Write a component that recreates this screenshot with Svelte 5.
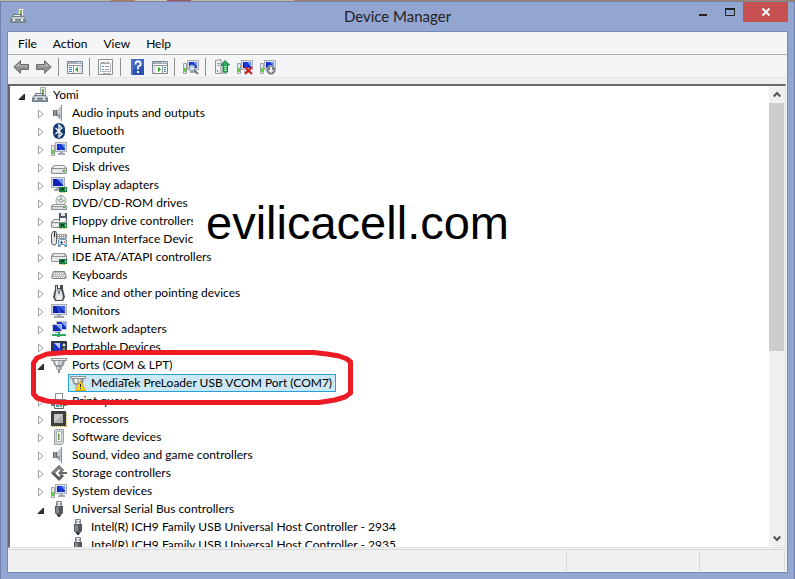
<script lang="ts">
  type Device = {
    name: string
    icon: string
    level: number
    open?: boolean
  }

  const menus = ['File', 'Action', 'View', 'Help']

  // each inner list is one group between separators
  const tools = [
    [['back', 'Back'], ['forward', 'Forward']],
    [['tree', 'Show/Hide Console Tree']],
    [['properties', 'Properties']],
    [['help', 'Help'], ['action', 'Show/Hide Action Pane']],
    [['scan', 'Scan for hardware changes']],
    [['update', 'Update Driver'], ['uninstall', 'Uninstall'], ['disable', 'Disable']]
  ]

  let devices = $state<Device[]>([
    { name: 'Yomi', icon: 'manager', level: 0, open: true },
    { name: 'Audio inputs and outputs', icon: 'speaker', level: 1, open: false },
    { name: 'Bluetooth', icon: 'bluetooth', level: 1, open: false },
    { name: 'Computer', icon: 'computer', level: 1, open: false },
    { name: 'Disk drives', icon: 'disk', level: 1, open: false },
    { name: 'Display adapters', icon: 'display', level: 1, open: false },
    { name: 'DVD/CD-ROM drives', icon: 'dvd', level: 1, open: false },
    { name: 'Floppy drive controllers', icon: 'floppy', level: 1, open: false },
    { name: 'Human Interface Devices', icon: 'hid', level: 1, open: false },
    { name: 'IDE ATA/ATAPI controllers', icon: 'ide', level: 1, open: false },
    { name: 'Keyboards', icon: 'keyboard', level: 1, open: false },
    { name: 'Mice and other pointing devices', icon: 'mouse', level: 1, open: false },
    { name: 'Monitors', icon: 'monitor', level: 1, open: false },
    { name: 'Network adapters', icon: 'network', level: 1, open: false },
    { name: 'Portable Devices', icon: 'portable', level: 1, open: false },
    { name: 'Ports (COM & LPT)', icon: 'port', level: 1, open: true },
    { name: 'MediaTek PreLoader USB VCOM Port (COM7)', icon: 'portwarn', level: 2 },
    { name: 'Print queues', icon: 'printer', level: 1, open: false },
    { name: 'Processors', icon: 'cpu', level: 1, open: false },
    { name: 'Software devices', icon: 'software', level: 1, open: false },
    { name: 'Sound, video and game controllers', icon: 'speaker', level: 1, open: false },
    { name: 'Storage controllers', icon: 'storage', level: 1, open: false },
    { name: 'System devices', icon: 'computer', level: 1, open: false },
    { name: 'Universal Serial Bus controllers', icon: 'usb', level: 1, open: true },
    { name: 'Intel(R) ICH9 Family USB Universal Host Controller - 2934', icon: 'usb', level: 2 },
    { name: 'Intel(R) ICH9 Family USB Universal Host Controller - 2935', icon: 'usb', level: 2 }
  ])

  let selected = $state('MediaTek PreLoader USB VCOM Port (COM7)')

  // rows under a closed parent are left out
  const rows = $derived.by(() => {
    const out: Device[] = []
    let hiddenBelow = Infinity
    for (const d of devices) {
      if (d.level > hiddenBelow) continue
      hiddenBelow = d.open === false ? d.level : Infinity
      out.push(d)
    }
    return out
  })
</script>

{#snippet screen()}
  <path d="M4 1h12v10H4z" fill="#a9adb8" />
  <path d="M5 2h10v8H5z" fill="#dde0ea" />
  <path d="M6 3h8v6H6z" fill="#0c1fb0" />
  <path d="M10 3h4v5z" fill="#6f93ff" />
  <path d="M6 3h4l3 6H9z" fill="#1a3bdc" />
  <path d="M9 11h3v1h2v2H7v-2h2z" fill="#a3a7ae" />
{/snippet}

{#snippet tower()}
  <path d="M.5 4.500h3v10h-3z" fill="#e8ebed" stroke="#9a9fa4" />
  <path d="M1 9h2v4H1z" fill="#5fd13c" />
{/snippet}

{#snippet drive()}
  <path d="M3 6h10l3 3v5l-1 1H1l-1-1V9z" fill="#8f9396" />
  <path d="M3.500 7h9l2 2h-13z" fill="#f3f4f5" />
  <path d="M1 10h14v4H1z" fill="#d8dadc" />
  <path d="M2 11h8v2H2z" fill="#eff0f1" />
  <path d="M12 11h2v2h-2z" fill="#3fa832" />
{/snippet}

{#snippet card()}
  <path d="M8 10h8v5H8z" fill="#1c7d43" />
  <path d="M10 11h3v2h-3z" fill="#083f22" />
  <path d="M14 11h1v3h-1z" fill="#8fd0a5" />
  <path d="M9 15h2v1H9zM12 15h2v1h-2z" fill="#d9bd55" />
{/snippet}

{#snippet plug()}
  <path d="M0 1h16v3h-2l-1 4-2 2H5L3 8 2 4H0z" fill="#8f9396" />
  <path d="M1 2h14v1H1z" fill="#eceeef" />
  <path d="M4 4h8l-1 4H5z" fill="#b9bdc0" />
  <path d="M4 4h3v4H5z" fill="#f1f2f3" />
  <path d="M9 4h1v4H9z" fill="#dcdfe0" />
  <path d="M5 10h6v2l-1 1H6l-1-1z" fill="#a7abae" />
  <path d="M6 10h2v2H6z" fill="#e2e4e5" />
  <path d="M7 13h2v3H7z" fill="#8a8e91" />
{/snippet}

{#snippet pane()}
  <path d="M.5 2.500h15v12H.5z" fill="#fff" stroke="#7d8793" />
  <path d="M1 3h14v2H1z" fill="#a6b0bd" />
  <path d="M10 3h1v1h-1zM12 3h1v1h-1zM14 3h1v1h-1z" fill="#fff" />
  <path d="M1 6h14v1H1z" fill="#8c96a3" />
{/snippet}

{#snippet icon(name: string)}
  <svg class="icon" viewBox="0 0 16 16" width="16" height="16" aria-hidden="true">
    {#if name === 'back' || name === 'forward'}
      <path
        d={name === 'back' ? 'M.7 8 7.500 1.700V5.500h8v5h-8v3.800z' : 'M15.300 8 8.500 1.700V5.500h-8v5h8v3.800z'}
        fill="#8f8f8f"
        stroke="#6c6c6c"
      />
      <path d={name === 'back' ? 'M3 7.500 6.500 4v2.500H14v1z' : 'M13 7.500 9.500 4v2.500H2v1z'} fill="#bcbcbc" />
    {:else if name === 'tree'}
      {@render pane()}
      <path d="M2 8h3v1H2zM2 10h3v1H2zM2 12h3v1H2z" fill="#2d83c6" />
      <path d="M6 7h1v7H6z" fill="#8c96a3" />
      <path d="M12 7h3v7h-3z" fill="#e1e5ea" />
      <path d="m8 10.500 3-3v6z" fill="#38a52e" />
    {:else if name === 'action'}
      {@render pane()}
      <path d="M12 8h2v1h-2zM12 10h2v1h-2zM12 12h2v1h-2z" fill="#2d83c6" />
      <path d="M10 7h1v7h-1z" fill="#8c96a3" />
      <path d="M1 7h3v7H1z" fill="#e1e5ea" />
      <path d="m9 10.500-3-3v6z" fill="#38a52e" />
    {:else if name === 'properties'}
      <path d="M.5.500h14v15H.5z" fill="#fbfbfb" stroke="#8c8f93" />
      <path d="M2.500 4.500h10v8h-10z" fill="#fff" stroke="#b0b4b8" />
      <path d="M3 3h4v2H3zM8 3h3v1H8z" fill="#a0a5ab" />
      <path d="M4 7h2v1H4zM4 10h2v1H4z" fill="#3c9bd0" />
      <path d="M7 7h4v1H7zM7 10h4v1H7zM5 14h3v1H5zM9 14h3v1H9z" fill="#989da2" />
    {:else if name === 'help'}
      <path d="M2 0h13v16H2z" fill="#2b51b5" />
      <path d="M2 0h2v16H2z" fill="#5373c9" />
      <path d="M4 0h11v7L4 10z" fill="#4067c6" />
      <path d="M6.500 5.500V4l1-1.500h3l1 1.500v2L9 8v2.500" fill="none" stroke="#fff" stroke-width="1.800" />
      <path d="M8 12h2v2H8z" fill="#fff" />
    {:else if name === 'scan'}
      {@render tower()}
      {@render screen()}
      <path d="m11 11 4 4" stroke="#6b7b88" stroke-width="2" />
      <circle cx="9" cy="9" r="3" fill="#dcebf5" fill-opacity=".85" stroke="#8c979f" />
    {:else if name === 'update'}
      <path d="M1.500 1.500 7 .500v14H1.500z" fill="#f1f3f4" stroke="#8c9296" />
      <path d="M3 4h3v1H3zM3 6h3v1H3z" fill="#9aa1a6" />
      <path d="M3 11h1v2H3z" fill="#3fb02f" />
      <path d="M7 13h6v2H7z" fill="#b5babe" />
      <path d="m11 1.500 4.500 4.500h-2v7h-4.500V6h-2z" fill="#2daa5d" stroke="#147540" />
      <path d="M10 7h3v1h-3zM10 9h3v1h-3zM10 11h3v1h-3z" fill="#a9e8b8" />
    {:else if name === 'uninstall'}
      {@render tower()}
      {@render screen()}
      <path d="m8 8 7 7m0-7-7 7" stroke="#d9201b" stroke-width="2" />
    {:else if name === 'disable'}
      {@render tower()}
      {@render screen()}
      <circle cx="11" cy="11" r="4.500" fill="#777b80" stroke="#b5b8bb" />
      <path d="M10 8h2v3h2l-3 3-3-3h2z" fill="#fff" />
    {:else if name === 'manager'}
      <path d="M8.500.500h5v8h-5z" fill="#eceeee" stroke="#a6abad" />
      <path d="M10 2h2v4h-2z" fill="#70b64f" />
      <path d="M3 6h9v2h2l2 3v4H0v-4l2-3h1z" fill="#727e85" />
      <path d="M4 7h6v1H4z" fill="#eef1f2" />
      <path d="M2 9h12l1 2H1z" fill="#c3cbd0" />
      <path d="M1 12h14v2H1z" fill="#8a979e" />
      <path d="M3 11h2v2H3zM11 11h2v2h-2z" fill="#e8ecee" />
    {:else if name === 'speaker'}
      <path d="M2 5h4v6H2z" fill="#5f666b" />
      <path d="M3 5h2v6H3z" fill="#8f969b" />
      <path d="M6 5 10 1v14l-4-4z" fill="#c3c9cd" />
      <path d="M6 9h3v5l-3-3z" fill="#98a1a7" />
      <path d="M10 0h1v16h-1z" fill="#8a9196" />
    {:else if name === 'bluetooth'}
      <rect x="2" width="12" height="16" rx="6" fill="#123c73" />
      <path d="m4.500 5 6.500 6-3 3V2l3 3-6.500 6" fill="none" stroke="#fff" stroke-width="1.300" />
    {:else if name === 'computer'}
      {@render tower()}
      {@render screen()}
    {:else if name === 'disk'}
      {@render drive()}
    {:else if name === 'display'}
      <path d="M0 0h14v11H0z" fill="#a9adb8" />
      <path d="M1 1h12v9H1z" fill="#d8dce8" />
      <path d="M2 2h10v7H2z" fill="#0e22b5" />
      <path d="M6 2h6v6z" fill="#6f94fb" />
      <path d="M5 11h3v1H5zM3 12h5v2H3z" fill="#a3a7ae" />
      {@render card()}
    {:else if name === 'dvd'}
      <circle cx="10" cy="5.500" r="5" fill="#e9ecec" stroke="#9ba0a0" />
      <path d="M10 1v3M6 5h2M12 6h2" stroke="#75ad76" />
      <circle cx="10" cy="5.500" r="1.500" fill="#fff" stroke="#888" />
      <path d="M2 9h12l2 2v4H0v-4z" fill="#8f9396" />
      <path d="M2 10h12v1H2z" fill="#f3f4f5" />
      <path d="M1 12h14v2H1z" fill="#d8dadc" />
      <path d="M12 12h2v1h-2z" fill="#3fa832" />
    {:else if name === 'floppy'}
      {@render drive()}
      <path d="M8 0h8v8H8z" fill="#515a60" />
      <path d="M10 0h4v3h-4z" fill="#dfe6ea" />
      <path d="M9 5h6v3H9z" fill="#f4f5f6" />
      {@render card()}
    {:else if name === 'hid'}
      <path d="M.5 3 2 .500h3L5.500 3v9l-1.500 2H2L.5 12z" fill="#dfe1e3" stroke="#5c6266" />
      <path d="M3 1h1v5H3z" fill="#272d31" />
      <path d="M6 3h10v5H6z" fill="#9aa0a4" />
      <path d="M7 4.500h8M7 6.500h8" stroke="#f2f4f5" stroke-dasharray="1" />
      <path d="m7 9 2-1h5l2 1v7h-2l-1.500-2h-2L9 16H7z" fill="#6f95bd" />
      <path d="m8 10 1-1h5l1 1v4l-2-1h-3l-2 1z" fill="#e9f1f8" />
      <path d="M10 10h1v3h-1zM9 11h3v1H9z" fill="#31588c" />
      <path d="M13 10h1v2h-1z" fill="#e26b4e" />
    {:else if name === 'ide'}
      <path d="M2 4h12l2 3v5l-1 1H1l-1-1V7z" fill="#909598" />
      <path d="M3 5h10l1 2H2zM1 8h14v4H1z" fill="#e7e9ea" />
      {@render card()}
    {:else if name === 'keyboard'}
      <path d="M2.500 4.500h11l2 6-1 1h-13l-1-1z" fill="#b8bcbf" stroke="#7d8387" />
      <path d="M3 6.500h10M3 8.500h11M2 10.500h12" stroke="#fff" stroke-dasharray="1" />
    {:else if name === 'mouse'}
      <path d="M4 0h3v3h2V0h3v4l2 8-2 4H4l-2-4 2-8z" fill="#454b4f" />
      <path d="m5 7 2-3h2l2 3 1 5-1 3H5l-1-3z" fill="#dfe1e3" />
      <path d="M5 1h1v4l-1 2z" fill="#d4d9dc" />
      <path d="M7 5h2v4H7z" fill="#7c8387" />
      <circle cx="8" cy="12" r="1.500" fill="#fff" />
    {:else if name === 'monitor'}
      <path d="M0 1h16v11H0z" fill="#a9adb8" />
      <path d="M1 2h14v9H1z" fill="#dde0ea" />
      <path d="M2 3h12v7H2z" fill="#0e20ae" />
      <path d="M7 3h7v6z" fill="#3a5fe6" />
      <path d="M5 3h3l3 7H8z" fill="#2d4bd4" />
      <path d="M6 12h4v1h3v2H3v-2h3z" fill="#a3a7ae" />
    {:else if name === 'network'}
      <path d="M5.500.500h10v8h-10z" fill="#1532bd" stroke="#bac3d4" />
      <path d="M10 1h5v5z" fill="#8aa8ff" />
      <path d="M1.500 3.500h9v7h-9z" fill="#132eb8" stroke="#c8ceda" />
      <path d="M5 4h5v5z" fill="#83a6ff" />
      <path d="M4 11h4v1H4z" fill="#91979d" />
      <path d="M7 11h2v2h6v2H9v1H6v-1H1v-2h6z" fill="#2aa866" />
    {:else if name === 'portable'}
      <rect x="0" y="2" width="16" height="12" rx="1" fill="#33383d" />
      <path d="M2 4h8v8H2z" fill="#1630c8" />
      <path d="M3 4h6v6z" fill="#b9cbff" />
      <circle cx="13" cy="6" r="1.500" fill="#d3d7da" />
      <path d="M12 9h2v3h-2z" fill="#8b9197" />
    {:else if name === 'port'}
      {@render plug()}
    {:else if name === 'portwarn'}
      {@render plug()}
      <path d="m10.500 6 5 9.500h-10z" fill="#ffd91c" stroke="#d6a400" />
      <path d="M10 9h1v3h-1zM10 13h1v1h-1z" fill="#222" />
    {:else if name === 'printer'}
      <path d="M4.500.500h7v7h-7z" fill="#fff" stroke="#8b9195" />
      <path d="M1 6h14l1 2v5H0V8z" fill="#7c8387" />
      <path d="M2 7h12v2H2z" fill="#d5d9db" />
      <path d="M3.500 10.500h9v5h-9z" fill="#fff" stroke="#5c6266" />
      <path d="M5 12h3v2H5z" fill="#429cc6" />
      <path d="M9 12h2v2H9z" fill="#54aa57" />
    {:else if name === 'cpu'}
      <path d="M1 1h15v15H1z" fill="#c5a14b" />
      <path d="M2 15.500h14M15.500 1v14" stroke="#fff" stroke-dasharray="1" />
      <path d="M0 0h15v15H0z" fill="#3d4042" />
      <path d="M3 3h9v9H3z" fill="#adafb0" />
      <path d="m3 3h9l-9 9z" fill="#c8cacb" />
    {:else if name === 'software'}
      <path d="M3.500 1.500 5 .500h7.500v13L11 15.500H3.500z" fill="#d5d8da" stroke="#9a9fa2" />
      <path d="M5.500 2.500h5v10h-5z" fill="#fff" stroke="#aeb3b6" />
      <path d="M7 5h2v6H7z" fill="#8ccc6c" />
      <path d="M7 4h1v7H7z" fill="#6a9a55" />
    {:else if name === 'storage'}
      <path d="M8 0 0 8l8 8 5-5-2-2-3 3-4-4 4-4 3 3 2-2z" fill="#55585a" />
      <path d="M8 0 0 8h4l4-4 3 3 2-2z" fill="#7f8385" />
      <path d="M7 8 10 5v2h6v2h-6v2z" fill="#67696b" />
    {:else if name === 'usb'}
      <path d="M5.500.500h5v5h-5z" fill="#e2e4e6" stroke="#85898d" />
      <path d="M6 2h1v2H6zM9 2h1v2H9z" fill="#7d8386" />
      <path d="M4 5h8v7l-2 2v1H6v-1l-2-2z" fill="#53575b" />
      <path d="M5 6h3v6H5z" fill="#86898c" />
      <path d="M7 14h2v2H7z" fill="#34373a" />
    {/if}
  </svg>
{/snippet}

<div class="desktop">
  <div class="window">
    <header class="titlebar">
      <span class="app-icon">{@render icon('manager')}</span>
      <h1>Device Manager</h1>
      <div class="caption-buttons">
        <button class="minimize" aria-label="Minimize">
          <svg width="10" height="10" viewBox="0 0 10 10"><path d="M1 7h8v2H1z" fill="#222" /></svg>
        </button>
        <button class="maximize" aria-label="Maximize">
          <svg width="10" height="10" viewBox="0 0 10 10">
            <path d="M.5 1.500h9v7h-9z" fill="none" stroke="#222" />
            <path d="M0 1h10v2H0z" fill="#222" />
          </svg>
        </button>
        <button class="close" aria-label="Close">
          <svg width="10" height="8" viewBox="0 0 10 8">
            <path d="m1.500.500 7 7m0-7-7 7" stroke="#fff" stroke-width="2" />
          </svg>
        </button>
      </div>
    </header>

    <div class="client">
      <nav class="menubar">
        {#each menus as menu}
          <button>{menu}</button>
        {/each}
      </nav>

      <div class="toolbar" role="toolbar" aria-label="Tools">
        {#each tools as group}
          <div class="tool-group">
            {#each group as [name, label]}
              <button aria-label={label} title={label}>{@render icon(name)}</button>
            {/each}
          </div>
        {/each}
      </div>

      <main class="panel">
        <div class="tree-view">
          <ul class="tree" role="tree">
            {#each rows as device}
              <li
                class="row level-{device.level}"
                role="treeitem"
                aria-selected={selected === device.name}
                aria-expanded={device.open}
              >
                {#if device.open === undefined}
                  <span class="expander"></span>
                {:else}
                  <button
                    class="expander"
                    aria-label="Toggle {device.name}"
                    onclick={() => (device.open = !device.open)}
                  >
                    <svg width="8" height="10" viewBox="0 0 8 10">
                      {#if device.open}
                        <path d="M6.500 3v5.500H1z" fill="#333" stroke="#222" />
                      {:else}
                        <path d="M1.500 1v8L6 5z" fill="#fff" stroke="#a0a0a0" />
                      {/if}
                    </svg>
                  </button>
                {/if}
                <button
                  class="device"
                  class:selected={selected === device.name}
                  onclick={() => (selected = device.name)}
                >
                  {@render icon(device.icon)}
                  <span>{device.name}</span>
                </button>
              </li>
            {/each}
          </ul>

          <div class="watermark">evilicacell.com</div>
          <svg class="marker" width="322" height="55" viewBox="0 0 322 55" aria-hidden="true">
            <path
              d="M34 2.500H283L296 4 308 6 316 9 319.500 12V43L314 47 304 50 288 52.500H30L16 51 6 48 2.500 44V13L6 8 16 4z"
            />
          </svg>
        </div>

        <div class="scrollbar">
          <button aria-label="Scroll up">
            <svg width="8" height="7" viewBox="0 0 8 7"><path d="m.7 5.500 3.300-3.500 3.300 3.500" /></svg>
          </button>
          <div class="track"><div class="thumb"></div></div>
          <button aria-label="Scroll down">
            <svg width="8" height="7" viewBox="0 0 8 7"><path d="M.7 1.500 4 5l3.300-3.500" /></svg>
          </button>
        </div>
      </main>

      <footer class="statusbar">
        <div></div>
        <div></div>
        <div></div>
      </footer>
    </div>
  </div>
</div>

<style>
  :global(body) {
    margin: 0;
  }

  .desktop {
    box-sizing: border-box;
    height: 100vh;
    padding-top: 1px;
    background: linear-gradient(90deg, #c8b79d 0 14%, #c17b43 14% 17%, #d5c8ad 17% 21%, #a65263 21% 24%, #c8b79d 24% 37%, #a7835f 37%);
    color: #000;
    font-family: Lato, 'Open Sans', sans-serif;
    font-size: 12px;
    overflow: hidden;
  }

  button {
    margin: 0;
    padding: 0;
    border: none;
    background: none;
    color: inherit;
    font: inherit;
  }

  svg {
    display: block;
    flex: none;
  }

  .window {
    box-sizing: border-box;
    display: flex;
    flex-direction: column;
    height: 100%;
    padding: 0 6px 6px;
    border: 1px solid #6f82ad;
    border-bottom: none;
    background: #93a6d1;
  }

  .titlebar {
    display: grid;
    grid-template-columns: 1fr auto 1fr;
    height: 29px;
  }

  .app-icon {
    padding: 6px 3px;
  }

  h1 {
    margin: 0;
    font-size: 15px;
    font-weight: 400;
    line-height: 29px;
    color: #222;
  }

  .caption-buttons {
    display: flex;
    align-items: flex-start;
    justify-content: flex-end;
  }

  .caption-buttons button {
    display: flex;
    align-items: center;
    justify-content: center;
    width: 27px;
    height: 20px;
  }

  .caption-buttons .close {
    width: 45px;
    background: #c75050;
  }

  .client {
    display: flex;
    flex: 1;
    flex-direction: column;
    min-height: 0;
    border: 1px solid #7389bc;
    background: #f4f5f7;
  }

  .menubar {
    display: flex;
    gap: 16px;
    height: 22px;
    padding-left: 10px;
    border-bottom: 1px solid #adafb2;
  }

  .toolbar {
    display: flex;
    align-items: center;
    height: 20px;
    padding: 2px 0 0 1px;
    border-bottom: 1px solid #e6e7e8;
  }

  .tool-group {
    display: flex;
  }

  .tool-group button {
    padding: 1px 3px 1px 4px;
  }

  .tool-group + .tool-group {
    margin-left: 3px;
    padding-left: 4px;
    border-left: 1px solid #8e8f91;
  }

  .panel {
    display: flex;
    flex: 1;
    min-height: 0;
    margin: 6px 1px 1px 0;
    border-style: solid;
    border-width: 2px 1px 1px 2px;
    border-color: #696969 #e3e3e3 #e3e3e3 #696969;
    background: #fff;
    box-shadow: 0 -6px 0 #efefef;
  }

  .tree-view {
    position: relative;
    flex: 1;
    min-width: 0;
    overflow: hidden;
  }

  .tree {
    margin: 0;
    padding: 0;
    list-style: none;
  }

  .row {
    display: flex;
    align-items: center;
    height: 18px;
    padding-left: 1px;
  }

  .level-1 {
    padding-left: 20px;
  }

  .level-2 {
    padding-left: 39px;
  }

  .expander {
    display: flex;
    justify-content: center;
    box-sizing: border-box;
    width: 19px;
    padding: 2px 0 0 3px;
  }

  .device {
    display: flex;
    align-items: center;
    gap: 5px;
    height: 18px;
    padding: 0 3px 0 1px;
    border: 1px solid transparent;
    line-height: 16px;
    white-space: nowrap;
  }

  .device.selected {
    border-color: #26a0da;
    background: #cbe8f6;
  }

  .watermark {
    position: absolute;
    top: 110px;
    left: 183px;
    padding: 0 13px;
    background: #fff;
    font-family: 'Liberation Sans', Arial, sans-serif;
    font-size: 47px;
    line-height: 54px;
  }

  .marker {
    position: absolute;
    top: 264px;
    left: 21px;
    pointer-events: none;
  }

  .marker path {
    fill: none;
    stroke: #ed1c24;
    stroke-width: 5;
    stroke-linejoin: round;
  }

  .scrollbar {
    display: flex;
    flex-direction: column;
    width: 16px;
    background: #f0f0f0;
  }

  .scrollbar button {
    display: flex;
    align-items: center;
    justify-content: center;
    height: 17px;
  }

  .scrollbar path {
    fill: none;
    stroke: #555;
    stroke-width: 2;
  }

  .track {
    flex: 1;
  }

  .thumb {
    width: 15px;
    height: 58%;
    background: #cdcdcd;
  }

  .statusbar {
    display: flex;
    height: 20px;
    padding: 1px 2px 1px 0;
    border-top: 1px solid #d7d7d7;
    background: #f0f0f0;
  }

  .statusbar div {
    border-right: 1px solid #d7d7d7;
    flex: 0 0 84px;
  }

  .statusbar div:first-child {
    flex: 1;
  }

  .statusbar div:nth-child(2) {
    flex-basis: 132px;
  }
</style>
